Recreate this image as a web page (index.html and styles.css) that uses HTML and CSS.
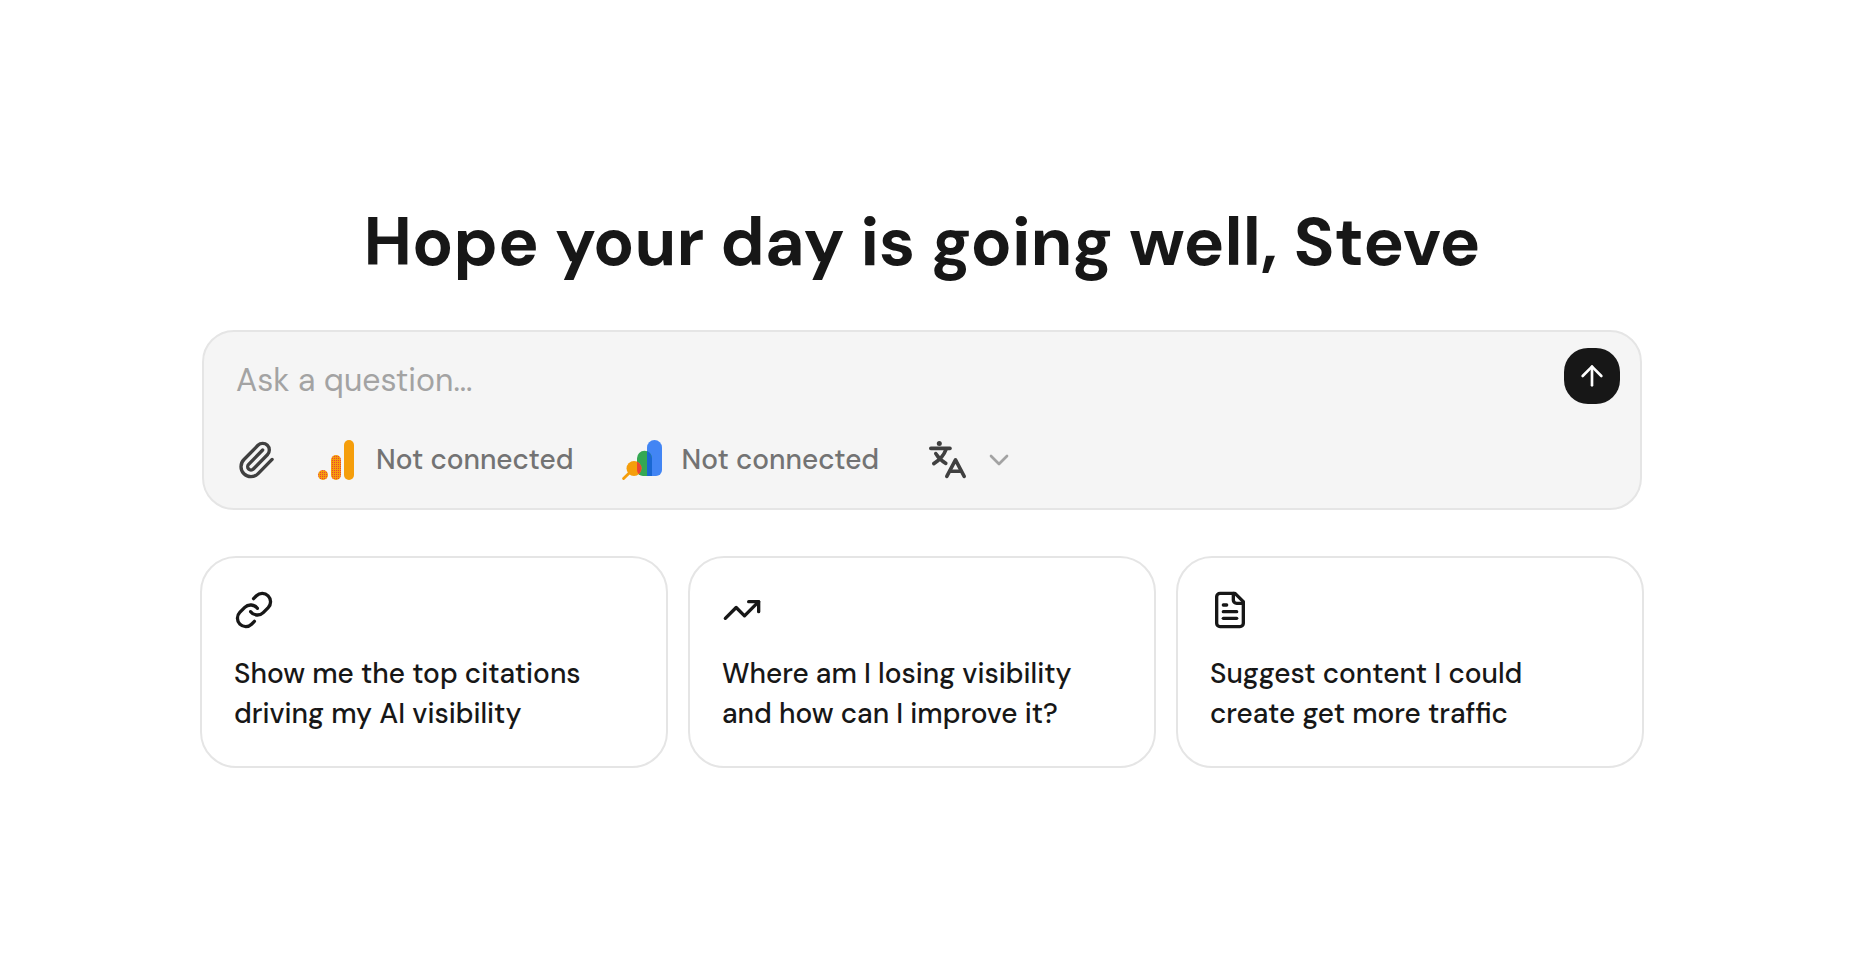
FILE: index.html
```html
<!DOCTYPE html>
<html lang="en">
<head>
<meta charset="utf-8">
<meta name="viewport" content="width=device-width, initial-scale=1">
<title>Assistant</title>
<link rel="stylesheet" href="styles.css">
</head>
<body>
<main class="page">
  <div class="content">
    <h1 class="greeting">Hope your day is going well, Steve</h1>

    <form class="composer">
      <div class="prompt">
        <input class="prompt-input" type="text" placeholder="Ask a question..." aria-label="Ask a question">
        <button class="send" type="button" aria-label="Send">
          <svg class="icon icon-sm" viewBox="0 0 24 24"><path d="m5 12 7-7 7 7"/><path d="M12 19V5"/></svg>
        </button>
      </div>
      <div class="toolbar">
        <button class="tool" type="button" aria-label="Attach file">
          <svg class="icon" viewBox="0 0 24 24"><path d="m16 6-8.414 8.586a2 2 0 0 0 2.829 2.829l8.414-8.586a4 4 0 1 0-5.657-5.657l-8.379 8.551a6 6 0 1 0 8.485 8.485l8.379-8.551"/></svg>
        </button>
        <div class="sources">
          <button class="tool source" type="button">
            <svg class="logo" viewBox="0 0 40 40" aria-hidden="true">
              <defs>
                <pattern id="dots" width="2" height="2" patternUnits="userSpaceOnUse">
                  <rect width="2" height="2" fill="#f59e0b"/>
                  <rect width="1" height="1" fill="#ea4335"/>
                </pattern>
              </defs>
              <rect x="28" y="0" width="10" height="40" rx="5" fill="#f59e0b"/>
              <rect x="15" y="15" width="10" height="25" rx="5" fill="url(#dots)"/>
              <circle cx="7" cy="35" r="5" fill="url(#dots)"/>
            </svg>
            <span>Not connected</span>
          </button>
          <button class="tool source" type="button">
            <svg class="logo" viewBox="0 0 40 40" aria-hidden="true">
              <defs>
                <clipPath id="middle-bar"><path d="M15 18.2a7.5 7.5 0 0 1 15 0V36h-9a6 6 0 0 1-6-6z"/></clipPath>
              </defs>
              <path fill="#4285f4" d="M25 7.5a7.5 7.5 0 0 1 15 0V30a6 6 0 0 1-6 6h-9z"/>
              <path fill="#34a853" d="M15 18.2a7.5 7.5 0 0 1 15 0V36h-9a6 6 0 0 1-6-6z"/>
              <path fill="#1967d2" clip-path="url(#middle-bar)" d="M25 10h5v26h-5z"/>
              <circle cx="12" cy="28.5" r="7.5" fill="#f59e0b"/>
              <circle cx="12" cy="28.5" r="7.5" fill="#ea4335" clip-path="url(#middle-bar)"/>
              <path d="M8 32.3 1.6 38.6" fill="none" stroke="#f59e0b" stroke-width="2.8" stroke-linecap="round"/>
            </svg>
            <span>Not connected</span>
          </button>
          <button class="tool language" type="button" aria-label="Language">
            <svg class="icon language-icon" viewBox="0 0 40 40">
              <circle class="dot" cx="12.3" cy="3.4" r="2.5"/>
              <path d="M3.8 8.4h19.2"/>
              <path d="M19 9.4c-1.8 5.2-6 10.400-12.200 14.200"/>
              <path d="M8.800 13.600c2.400 4 5.800 7.400 10 9.800"/>
              <path d="m19.800 36.400 8.700-16.600 8.700 16.600"/>
              <path d="M23 31.200h11"/>
            </svg>
            <svg class="icon icon-sm chevron" viewBox="0 0 24 24"><path d="m6 9 6 6 6-6"/></svg>
          </button>
        </div>
      </div>
    </form>

    <div class="suggestions">
      <button class="card" type="button">
        <svg class="icon" viewBox="0 0 24 24"><path d="M10 13a5 5 0 0 0 7.540.540l3-3a5 5 0 0 0-7.070-7.070l-1.720 1.710"/><path d="M14 11a5 5 0 0 0-7.540-.540l-3 3a5 5 0 0 0 7.070 7.070l1.710-1.710"/></svg>
        <span>Show me the top citations driving my AI visibility</span>
      </button>
      <button class="card" type="button">
        <svg class="icon" viewBox="0 0 24 24"><path d="M22 7l-8.500 8.500-5-5L2 17"/><path d="M16 7h6v6"/></svg>
        <span>Where am I losing visibility and how can I improve it?</span>
      </button>
      <button class="card" type="button">
        <svg class="icon" viewBox="0 0 24 24"><path d="M15 2H6a2 2 0 0 0-2 2v16a2 2 0 0 0 2 2h12a2 2 0 0 0 2-2V7Z"/><path d="M14 2v4a2 2 0 0 0 2 2h4"/><path d="M10 9H8"/><path d="M16 13H8"/><path d="M16 17H8"/></svg>
        <span>Suggest content I could create get more traffic</span>
      </button>
    </div>
  </div>
</main>
</body>
</html>
```
FILE: styles.css
```css
*,
*::before,
*::after {
  box-sizing: border-box;
}

body {
  margin: 0;
  background: #fff;
  color: #171717;
  font-family: "DM Sans", Inter, "Liberation Sans", sans-serif;
  font-size: 28px;
  font-weight: 500;
  line-height: 40px;
}

button,
input {
  margin: 0;
  padding: 0;
  border: 0;
  background: none;
  color: inherit;
  font: inherit;
}

button {
  cursor: pointer;
}

.page {
  min-height: 100vh;
  display: flex;
  align-items: center;
  justify-content: center;
  padding: 0 8px 10px 0;
}

.content {
  width: 80%;
  max-width: 1444px;
}

.greeting {
  margin: 0 0 48px;
  text-align: center;
  font-size: 68px;
  font-weight: 700;
  line-height: 80px;
}

.icon {
  display: block;
  flex: none;
  width: 40px;
  height: 40px;
  fill: none;
  stroke: currentColor;
  stroke-width: 2;
  stroke-linecap: round;
  stroke-linejoin: round;
}

.icon-sm {
  width: 32px;
  height: 32px;
}

.composer {
  margin: 0 2px 46px;
  padding: 16px 20px 28px 32px;
  border: 2px solid #e5e5e5;
  border-radius: 32px;
  background: #f5f5f5;
}

.prompt {
  display: flex;
  align-items: flex-start;
  gap: 24px;
  margin-bottom: 28px;
}

.prompt-input {
  flex: 1;
  min-width: 0;
  height: 64px;
  outline: 0;
  font-size: 32px;
  font-weight: 400;
}

.prompt-input::placeholder {
  color: #a3a3a3;
  opacity: 1;
}

.send {
  display: grid;
  place-items: center;
  width: 56px;
  height: 56px;
  border-radius: 24px;
  background: #171717;
  color: #fff;
}

.toolbar {
  display: flex;
  align-items: center;
  gap: 40px;
}

.sources {
  display: flex;
  align-items: center;
  gap: 48px;
}

.tool {
  display: flex;
  align-items: center;
  color: #404040;
}

.source {
  gap: 20px;
  color: #737373;
  font-weight: 500;
}

.logo {
  display: block;
  width: 40px;
  height: 40px;
}

.language {
  gap: 16px;
}

.language-icon {
  stroke-width: 3.6;
}

.dot {
  fill: currentColor;
  stroke: none;
}

.chevron {
  color: #a3a3a3;
}

.suggestions {
  display: grid;
  grid-template-columns: repeat(3, 1fr);
  gap: 20px;
}

.card {
  display: flex;
  flex-direction: column;
  gap: 24px;
  padding: 32px 48px 32px 32px;
  border: 2px solid #e5e5e5;
  border-radius: 36px;
  background: #fff;
  text-align: left;
}
```
